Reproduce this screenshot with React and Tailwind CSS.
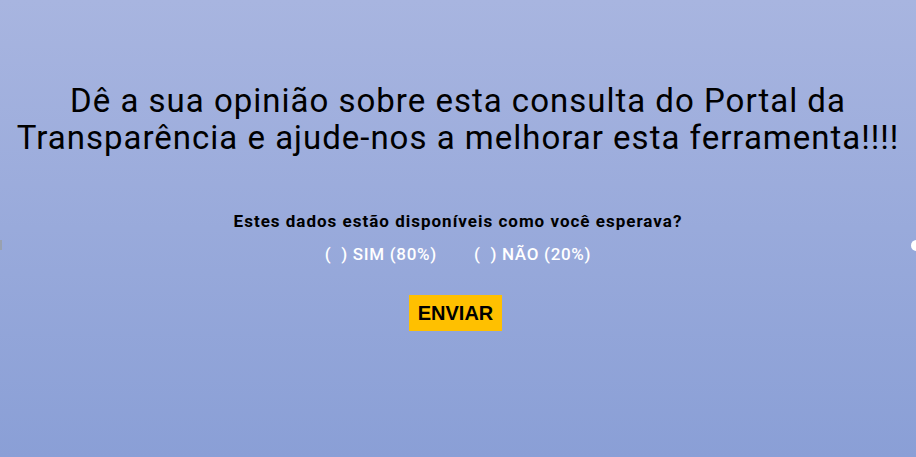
export default function App() {
  return (
    <div className="relative h-[457px] w-full overflow-hidden bg-gradient-to-b from-[#a8b5e0] to-[#8a9fd6] font-['Roboto',sans-serif]">
      <div className="flex flex-col items-center pt-[82px]">
        <h1 className="text-center text-[33px] leading-[37px] font-normal text-black tracking-[1px]">
          Dê a sua opinião sobre esta consulta do Portal da
          <br />
          Transparência e ajude-nos a melhorar esta ferramenta!!!!
        </h1>
        <p className="mt-[53px] text-[17px] font-bold text-black tracking-[1px]">
          Estes dados estão disponíveis como você esperava?
        </p>
        <div className="mt-[7px] flex gap-[37px] text-[17px] font-medium text-white tracking-[0.7px]">
          <span>(&nbsp;&nbsp;) SIM (80%)</span>
          <span>(&nbsp;&nbsp;) NÃO (20%)</span>
        </div>
        <button className="mt-[28px] mr-[5px] h-[36px] w-[93px] bg-[#ffc000] text-[20px] font-bold text-black font-['Liberation_Sans',sans-serif]">
          ENVIAR
        </button>
      </div>
      <div className="absolute right-[-6px] top-[240px] h-[11px] w-[11px] rounded-full bg-white" />
      <div className="absolute left-0 top-[240px] h-[10px] w-[2px] bg-gray-400" />
    </div>
  );
}
